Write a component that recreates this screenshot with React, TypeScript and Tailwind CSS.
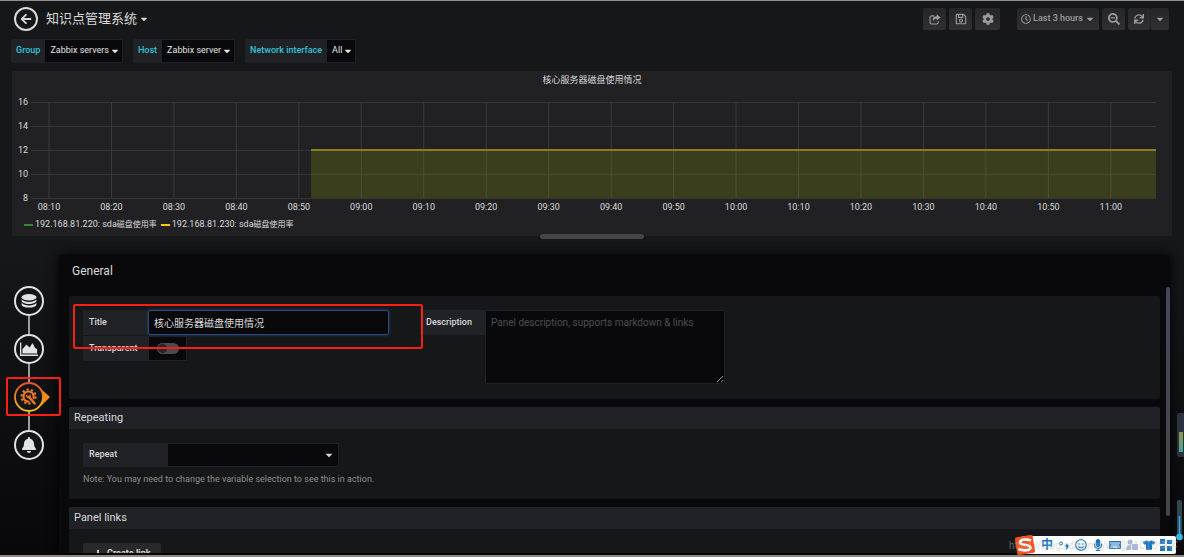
import { useState } from "react";
import type { ReactNode } from "react";
import {
  FaArrowLeft,
  FaBell,
  FaCaretDown,
  FaCog,
  FaKeyboard,
  FaMicrophone,
  FaPlus,
  FaRegClock,
  FaRegSave,
  FaRegSmile,
  FaSearchMinus,
  FaSync,
  FaTshirt,
} from "react-icons/fa";

const times = [
  "08:10", "08:20", "08:30", "08:40", "08:50", "09:00", "09:10", "09:20", "09:30",
  "09:40", "09:50", "10:00", "10:10", "10:20", "10:30", "10:40", "10:50", "11:00",
];
const levels = [16, 14, 12, 10, 8];

const variables = [
  { name: "Group", value: "Zabbix servers" },
  { name: "Host", value: "Zabbix server" },
  { name: "Network interface", value: "All" },
];

const legend = [
  { host: "192.168.81.220", color: "bg-[#37872d]" },
  { host: "192.168.81.230", color: "bg-[#f2cc0c]" },
];

// position of the n-th ten minute tick, as a share of the visible range
const tickX = (i: number) => `${1.6 + i * 5.552}%`;

function NavButton({ label, className = "w-[23px]", children }: { label: string; className?: string; children: ReactNode }) {
  return (
    <button
      aria-label={label}
      className={`flex h-[22px] items-center justify-center rounded-xs bg-linear-to-b from-[#262628] to-[#303032] text-[#9a9b9d] ${className}`}
    >
      {children}
    </button>
  );
}

function ShareIcon() {
  return (
    <svg viewBox="0 0 14 12" className="h-[11px] w-3" fill="none" stroke="currentColor">
      <path d="M6 1.800H3.200a2 2 0 0 0-2 2v5.400a2 2 0 0 0 2 2h5.600a2 2 0 0 0 2-2V8" strokeWidth="1.300" />
      <path d="M9 0l4.500 3.600L9 7.200V5.100c-2.600 0-4 .7-3.400 3.400C3.300 5.500 4.500 2.200 9 2.100z" fill="currentColor" stroke="none" />
    </svg>
  );
}

function Header() {
  return (
    <header className="flex items-center justify-between pt-1.5 pr-[15px] pl-3.5">
      <div className="flex items-center gap-2">
        <a href="#" aria-label="Back" className="flex size-6 items-center justify-center rounded-full border-2 border-[#d8d9da]">
          <FaArrowLeft className="size-3" />
        </a>
        <button className="flex items-center gap-0.5 text-[13px] leading-5">
          知识点管理系统 <FaCaretDown className="size-2.5" />
        </button>
      </div>
      <div className="flex gap-[3px]">
        <NavButton label="Share dashboard"><ShareIcon /></NavButton>
        <NavButton label="Save dashboard"><FaRegSave className="size-3" /></NavButton>
        <NavButton label="Settings" className="mr-3.5 w-[25px]"><FaCog className="size-3" /></NavButton>
        <NavButton label="Time range" className="w-[82px] gap-0.5 text-[9px] font-medium">
          <FaRegClock className="size-2.5" /> Last 3 hours <FaCaretDown className="size-2.5" />
        </NavButton>
        <NavButton label="Zoom out"><FaSearchMinus className="size-3" /></NavButton>
        <div className="flex">
          <NavButton label="Refresh" className="w-[22px]"><FaSync className="size-2.5" /></NavButton>
          <NavButton label="Refresh interval" className="w-[19px] border-l border-[#252527]"><FaCaretDown className="size-2.5" /></NavButton>
        </div>
      </div>
    </header>
  );
}

function Variables() {
  return (
    <div className="mt-2 flex gap-2.5 pl-[11px] text-[9px]">
      {variables.map((v) => (
        <div key={v.name} className="flex h-6 items-center rounded-xs bg-[#202226]">
          <span className="px-[5px] font-medium text-[#33c4d2]">{v.name}</span>
          <button aria-label={v.name} className="my-px mr-px flex h-[22px] items-center gap-px bg-[#09090b] pr-0.5 pl-[5px] text-[#e3e3e3]">
            {v.value} <FaCaretDown className="size-2.5" />
          </button>
        </div>
      ))}
    </div>
  );
}

function Chart() {
  return (
    <div className="pt-[13px] pr-4 pl-[19px]">
      <svg className="block h-[112px] w-full overflow-visible text-[9px]" fill="#d8d9da">
        {levels.map((n, i) => (
          <g key={n}>
            <line x1="0" x2="100%" y1={i * 24 + 0.5} y2={i * 24 + 0.5} stroke="#353537" />
            <text x="-3" y={i * 24 + 3} textAnchor="end">{n}</text>
          </g>
        ))}
        {times.map((t, i) => (
          <g key={t}>
            <line x1={tickX(i)} x2={tickX(i)} y1="0" y2="96" stroke="#3a3a3c" />
            <text x={tickX(i)} y="108" textAnchor="middle">{t}</text>
          </g>
        ))}
        <rect x="24.9%" y="48" width="75.1%" height="48" fill="#a3b500" fillOpacity="0.2" />
        <line x1="24.9%" x2="100%" y1="48" y2="48" stroke="#8a8218" strokeWidth="2" />
      </svg>
    </div>
  );
}

function GraphPanel() {
  return (
    <section className="relative mx-3 mt-2 h-[165px] shrink-0 rounded-xs bg-[#212124]">
      <h2 className="pt-px text-center text-[9px] leading-[17px]">核心服务器磁盘使用情况</h2>
      <Chart />
      <ul className="mt-0.5 flex gap-1 pl-3 text-[9px] leading-4">
        {legend.map((l) => (
          <li key={l.host} className="flex items-center gap-0.5">
            <span className={`h-0.5 w-[9px] ${l.color}`} />
            <span>{l.host}: sda<span className="text-[8px]">磁盘使用率</span></span>
          </li>
        ))}
      </ul>
      <div className="absolute -bottom-[3px] left-1/2 h-[5px] w-[104px] -translate-x-1/2 rounded-full bg-[#444547]" />
    </section>
  );
}

function DatabaseIcon() {
  return (
    <svg viewBox="0 0 16 16" className="size-4" fill="#e3e3e3">
      <ellipse cx="8" cy="4.200" rx="7.400" ry="3.200" />
      <path d="M.6 6.200c1.400 2 4.300 2.700 7.400 2.700s6-.7 7.400-2.700v1.500c0 1.600-3 3.200-7.400 3.200S.6 9.300.6 7.700z" />
      <path d="M.6 9.800c1.400 2 4.300 2.700 7.400 2.700s6-.7 7.400-2.700v1.600c0 1.600-3 3.200-7.400 3.200s-7.400-1.600-7.400-3.200z" />
    </svg>
  );
}

function GraphIcon() {
  return (
    <svg viewBox="0 0 18 14" className="h-3.5 w-[18px]" fill="#e3e3e3">
      <path d="M0 .5h1.300v12H18V14H0z" />
      <path d="M2.400 11.500V7.200l4-4.800 3.200 3 2.900-4.400 2.600 5 2 1v4.500z" />
    </svg>
  );
}

function GearWrenchIcon() {
  return (
    <svg viewBox="0 0 20 20" className="size-[18px]" fill="none" stroke="#f47c20">
      <circle cx="9.500" cy="9.500" r="5.600" strokeWidth="2.400" />
      <circle cx="9.500" cy="9.500" r="7.800" strokeWidth="2.400" strokeDasharray="2.450 2.450" />
      <path d="M10.500 11l6 7" stroke="#131416" strokeWidth="5" />
      <path d="M10 10l6.300 7.300" strokeWidth="2.600" strokeLinecap="round" />
      <path d="M7.600 7.800c-.8 1.900.8 3.300 2.500 2.600 1.300-.7 1.400-2 .8-3" strokeWidth="1.600" />
    </svg>
  );
}

function SettingsTab() {
  return (
    <a href="#general" aria-label="General" className="relative flex size-[30px] items-center justify-center">
      <svg viewBox="0 0 36 30" className="absolute top-0 left-0 h-[30px] w-9">
        <defs>
          <linearGradient id="warm" x1="0" y1="0" x2="0" y2="1">
            <stop offset="0" stopColor="#e8502a" />
            <stop offset="1" stopColor="#f9c410" />
          </linearGradient>
        </defs>
        <path d="M27 7l9 8-9 9c2.500-5 2.500-12 0-17z" fill="#f58a20" />
        <circle cx="15" cy="15" r="14" fill="#131416" stroke="url(#warm)" strokeWidth="1.800" />
      </svg>
      <span className="relative"><GearWrenchIcon /></span>
    </a>
  );
}

function EditorTabs() {
  const ring = "flex size-[30px] items-center justify-center rounded-full border-2 border-[#e3e3e3] bg-[#131416]";
  const link = <span className="h-[18px] w-0.5 bg-[#9c9d9f]" />;
  return (
    <nav className="flex w-[59px] shrink-0 flex-col items-center bg-linear-to-b from-[#161719] to-[#08080a] pt-[31px] pr-px">
      <a href="#queries" aria-label="Queries" className={ring}><DatabaseIcon /></a>
      {link}
      <a href="#visualization" aria-label="Visualization" className={ring}><GraphIcon /></a>
      {link}
      <div className="relative z-10">
        <SettingsTab />
        <span className="absolute -top-[5px] -bottom-1 -left-2 w-[55px] rounded-xs border-2 border-[#f81f13]" />
      </div>
      {link}
      <a href="#alert" aria-label="Alert" className={ring}><FaBell className="size-4 text-[#e3e3e3]" /></a>
    </nav>
  );
}

function GeneralSection() {
  const [title, setTitle] = useState("核心服务器磁盘使用情况");
  const label = "flex h-[25px] w-[65px] shrink-0 items-center bg-[#202226] pl-1.5 text-[9px] font-medium";
  return (
    <section className="relative flex h-[103px] shrink-0 items-start gap-[31px] rounded-xs bg-[#161719] p-3.5">
      <div className="flex flex-col gap-px">
        <div className="flex">
          <label htmlFor="title" className={label}>Title</label>
          <input
            id="title"
            value={title}
            onChange={(e) => setTitle(e.target.value)}
            className="h-[25px] w-[241px] rounded-xs border border-[#2b4a7c] bg-[#09090b] px-[5px] text-[10px] shadow-[0_0_3px_#2b4a7c] outline-none"
          />
        </div>
        <div className="flex">
          <label htmlFor="transparent" className={label}>Transparent</label>
          <div className="flex h-[25px] w-[39px] items-center justify-center border border-[#202226] bg-[#09090b]">
            <input
              id="transparent"
              type="checkbox"
              className="h-[11px] w-[22px] appearance-none rounded-full bg-[#4b4b4d] before:block before:size-[11px] before:rounded-full before:border before:border-[#4b4b4d] before:bg-[#262628] checked:before:ml-[11px]"
            />
          </div>
        </div>
      </div>
      <div className="flex">
        <label htmlFor="description" className={label}>Description</label>
        <textarea
          id="description"
          placeholder="Panel description, supports markdown & links"
          className="h-[74px] w-[240px] rounded-xs border border-[#202226] bg-[#09090b] px-[5px] py-1 text-[10px] leading-4 placeholder:text-[#4c4d4f]"
        />
      </div>
      <span className="pointer-events-none absolute top-2 left-1 h-[45px] w-[350px] rounded-xs border-2 border-[#f81f13]" />
    </section>
  );
}

function SectionHeader({ children }: { children: ReactNode }) {
  return <h3 className="rounded-t-xs bg-[#202226] pl-[5px] text-[11px] leading-[22px]">{children}</h3>;
}

function Editor() {
  return (
    <main className="mr-3.5 flex min-w-0 flex-1 overflow-hidden rounded-t-xs bg-[#09090b] pl-2.5 shadow-[0_0_12px_#000]">
      <div className="flex min-w-0 flex-1 flex-col gap-2">
        <h2 className="h-[33px] shrink-0 pl-[3px] text-[12px] leading-8">General</h2>
        <GeneralSection />
        <section className="h-[92px] shrink-0 rounded-xs bg-[#161719]">
          <SectionHeader>Repeating</SectionHeader>
          <div className="px-3.5 pt-3.5">
            <div className="flex h-6 w-64 items-center bg-[#202226]">
              <label htmlFor="repeat" className="w-[85px] pl-1.5 text-[9px] font-medium">Repeat</label>
              <div className="relative mr-px flex-1">
                <select id="repeat" className="block h-[22px] w-full appearance-none bg-[#09090b] text-[9px]">
                  <option value=""></option>
                </select>
                <FaCaretDown className="pointer-events-none absolute top-1.5 right-1 size-2.5" />
              </div>
            </div>
            <p className="mt-1 text-[9px] leading-4 text-[#8e8e8e]">
              Note: You may need to change the variable selection to see this in action.
            </p>
          </div>
        </section>
        <section className="h-[92px] shrink-0 rounded-xs bg-[#161719]">
          <SectionHeader>Panel links</SectionHeader>
          <button className="mt-3.5 ml-3.5 flex h-[22px] items-center gap-1 rounded-xs bg-[#29292c] px-2.5 text-[9px] font-bold">
            <FaPlus className="size-2.5" /> Create link
          </button>
        </section>
      </div>
      <div className="mt-8 mb-[37px] ml-1.5 w-1 rounded-full bg-linear-to-b from-[#46475c] to-[#464648]" />
    </main>
  );
}

function InputMethodBar() {
  return (
    <div className="absolute right-2 bottom-px flex h-[18px] items-center gap-[5px] rounded-xs bg-white pr-1 text-[#1673c4]">
      <svg viewBox="0 0 22 20" className="-ml-2 h-5 w-[22px]">
        <rect x="2" y="1" width="18" height="18" rx="2" fill="#f4511e" transform="rotate(-9 11 10)" />
        <path d="M17 5.500C12 3.500 6 4.500 6 7.500S16.500 9 16.500 12.500 9 16 4.500 14" fill="none" stroke="#fff" strokeWidth="2.600" />
      </svg>
      <span className="text-[12px] leading-4 font-bold">中</span>
      <svg viewBox="0 0 12 12" className="size-3" fill="currentColor">
        <circle cx="3" cy="4.500" r="1.500" fill="none" stroke="currentColor" />
        <path d="M7.500 6a1.600 1.600 0 0 1 3 .8c0 2-1 3.400-2.500 4l-.4-.8c.8-.4 1.200-1 1.200-1.700-.9 0-1.500-.9-1.300-2.300z" />
      </svg>
      <FaRegSmile className="size-3" />
      <FaMicrophone className="size-3" />
      <FaKeyboard className="size-3" />
      <svg viewBox="0 0 12 12" className="size-3" fill="#a9b9dc">
        <circle cx="4" cy="3" r="2.500" />
        <path d="M0 11c0-4 2-5 4-5h1v5z" />
        <rect x="6" y="5" width="6" height="6" rx="1" />
      </svg>
      <FaTshirt className="size-3" />
      <svg viewBox="0 0 12 12" className="size-3" fill="currentColor">
        <rect x="0" y="0" width="5" height="5" />
        <rect x="7" y="1" width="5" height="4" />
        <rect x="0" y="7" width="5" height="5" />
        <rect x="7" y="7" width="5" height="5" />
      </svg>
    </div>
  );
}

function DesktopOverlay() {
  return (
    <div className="pointer-events-none absolute inset-0 overflow-hidden">
      <div className="absolute right-0 bottom-[98px] h-11 w-[7px] rounded-l-xs bg-[#2d303f] pt-[19px] pl-0.5">
        <div className="h-5 w-1 bg-linear-to-b from-[#929346] to-[#33a89b]" />
      </div>
      <svg viewBox="0 0 8 44" className="absolute right-0 bottom-3 h-11 w-2">
        <rect x="1" y="1" width="5" height="40" rx="2" fill="#34454e" />
        <path d="M3.500 17v20" stroke="#28aee4" strokeWidth="1.500" />
        <circle cx="3.500" cy="38" r="3.300" fill="#32b9ea" />
      </svg>
      <InputMethodBar />
      <p className="absolute right-1.5 bottom-0.5 text-[10px] whitespace-nowrap text-[#b5b6b8]/50">
        https://blog.csdn.net/we@51CTO博客
      </p>
    </div>
  );
}

export default function App() {
  return (
    <div className="relative flex h-screen flex-col overflow-hidden border-t border-b-2 border-t-[#8b9090] border-b-[#8b8886] bg-[#161719] font-[Roboto,'Noto_Sans_CJK_SC',sans-serif] text-[#d8d9da]">
      <Header />
      <Variables />
      <GraphPanel />
      <div className="mt-[19px] flex min-h-0 flex-1 border-b-2 border-[#09090b] bg-linear-to-b from-[#161719] to-[#0b0b0d]">
        <EditorTabs />
        <Editor />
      </div>
      <DesktopOverlay />
    </div>
  );
}
